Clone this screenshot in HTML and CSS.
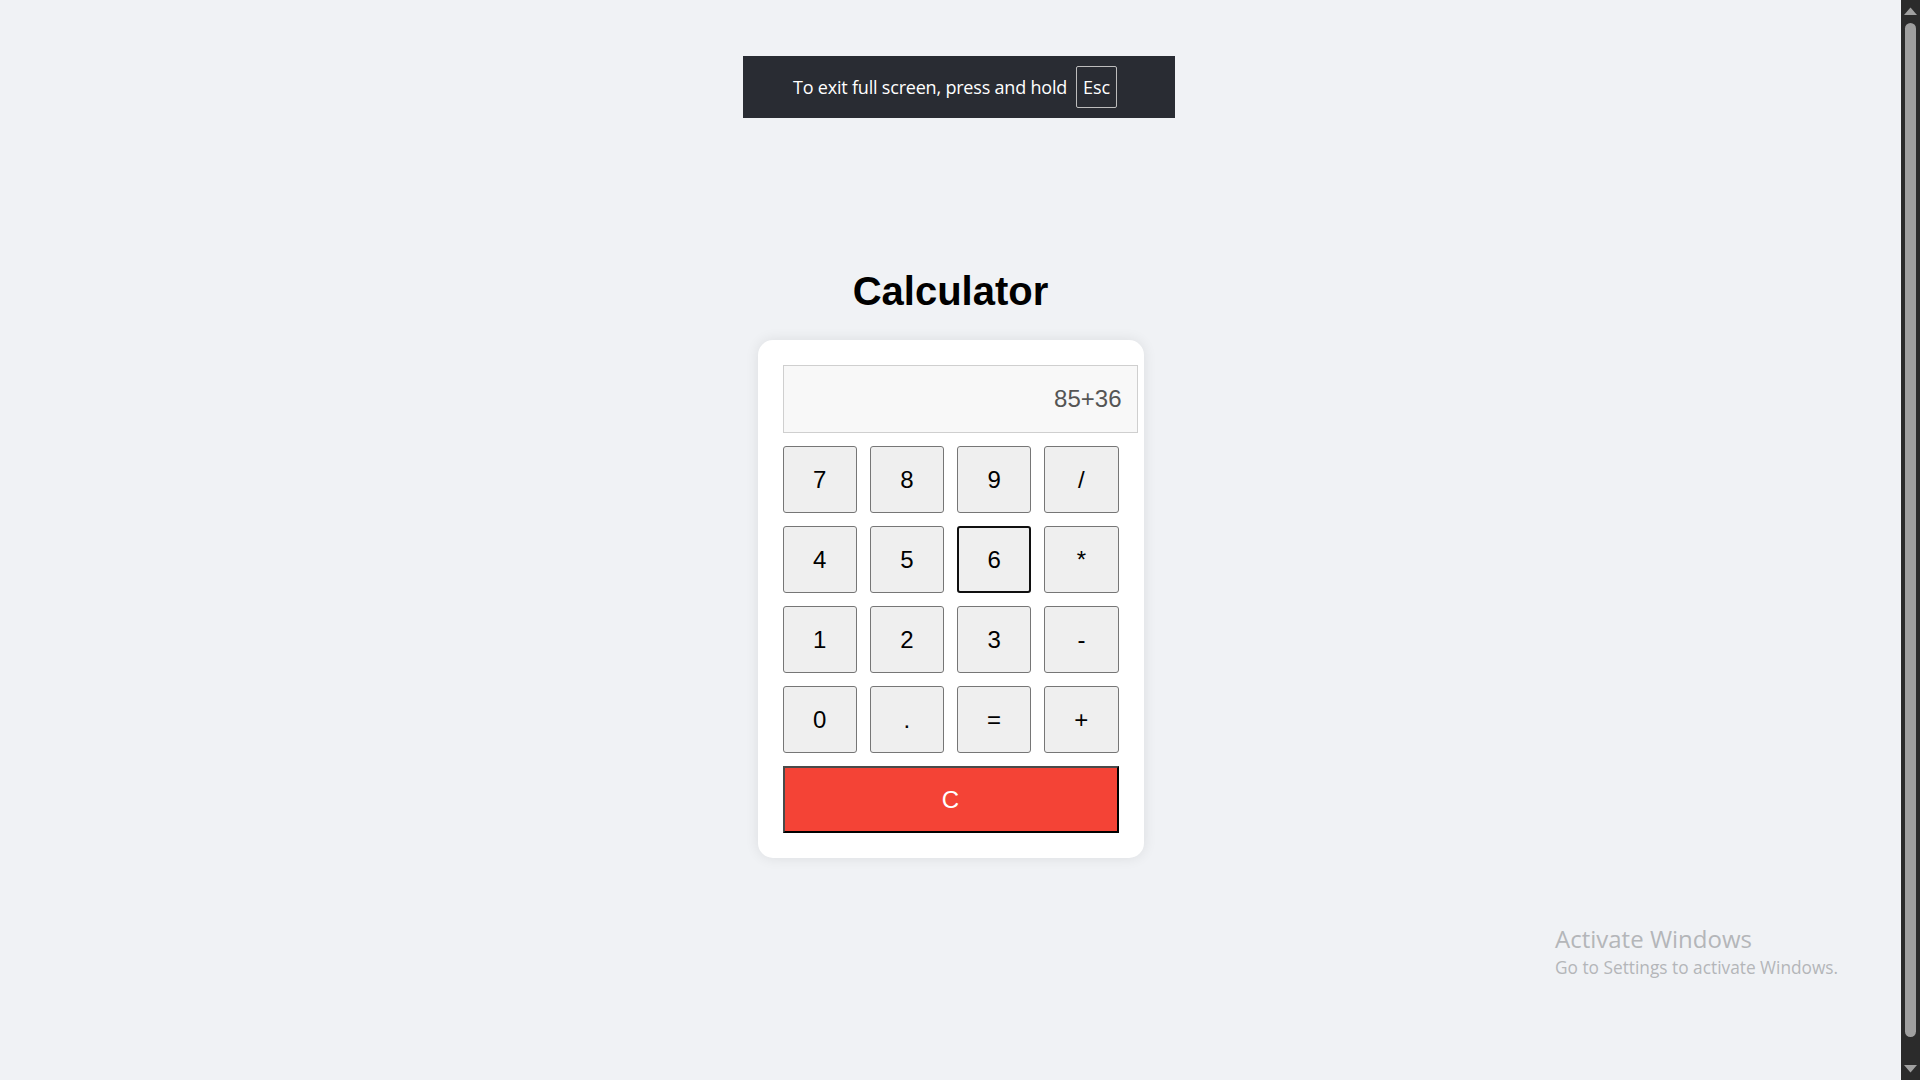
FILE: index.html
```html
<!DOCTYPE html>
<html lang="en">
<head>
<meta charset="utf-8">
<title>Calculator</title>
<link rel="stylesheet" href="styles.css">
</head>
<body>
<div class="screen">
  <main class="page">
    <h1 class="title">Calculator</h1>
    <div class="calculator">
      <div class="display">85+36</div>
      <div class="keys">
        <button class="key">7</button>
        <button class="key">8</button>
        <button class="key">9</button>
        <button class="key">/</button>
        <button class="key">4</button>
        <button class="key">5</button>
        <button class="key key-focus">6</button>
        <button class="key">*</button>
        <button class="key">1</button>
        <button class="key">2</button>
        <button class="key">3</button>
        <button class="key">-</button>
        <button class="key">0</button>
        <button class="key">.</button>
        <button class="key">=</button>
        <button class="key">+</button>
        <button class="key key-clear">C</button>
      </div>
    </div>
  </main>
  <div class="scrollbar">
    <div class="scroll-arrow">
      <svg width="19" height="17" viewBox="0 0 19 17"><polygon points="3,15 16,15 9.5,7.5" fill="#a0a0a0"/></svg>
    </div>
    <div class="scroll-track"><div class="scroll-thumb"></div></div>
    <div class="scroll-arrow">
      <svg width="19" height="17" viewBox="0 0 19 17"><polygon points="3,2 16,2 9.5,9.5" fill="#a0a0a0"/></svg>
    </div>
  </div>
</div>

<div class="fs-bubble">
  <span class="fs-text">To exit full screen, press and hold</span>
  <span class="fs-key">Esc</span>
</div>

<div class="watermark">
  <div class="wm-title">Activate Windows</div>
  <div class="wm-sub">Go to Settings to activate Windows.</div>
</div>
</body>
</html>
```

FILE: styles.css
```css
* { box-sizing: border-box; }

html, body {
  margin: 0;
  padding: 0;
  height: 100%;
  overflow: hidden;
}

body {
  background: #f0f2f5;
  font-family: "Liberation Sans", Arial, sans-serif;
}

.screen {
  display: flex;
  height: 1080px;
}

.page {
  flex: 1;
  display: flex;
  flex-direction: column;
  align-items: center;
  padding-top: 269px;
}

.title {
  margin: 0 0 26px;
  font-size: 40px;
  line-height: 45px;
  font-weight: bold;
  color: #000;
}

.calculator {
  width: 386px;
  padding: 25px;
  background: #fff;
  border-radius: 15px;
  box-shadow: 0 0 14px rgba(0, 0, 0, 0.09);
}

.display {
  width: 355px;
  height: 68px;
  margin-bottom: 13px;
  padding-right: 15px;
  display: flex;
  align-items: center;
  justify-content: flex-end;
  background: #f8f8f8;
  border: 1px solid #cfcfcf;
  font-size: 24px;
  color: #555;
}

.keys {
  width: 336px;
  display: grid;
  grid-template-columns: repeat(4, 1fr);
  grid-auto-rows: 67px;
  gap: 13px;
}

.key {
  margin: 0;
  padding: 0;
  background: #efefef;
  border: 1px solid #767676;
  border-radius: 3px;
  font-family: "Liberation Sans", Arial, sans-serif;
  font-size: 24px;
  color: #000;
}

.key-focus {
  border: 2px solid #101010;
}

.key-clear {
  grid-column: 1 / -1;
  background: #f44336;
  color: #fff;
  border-radius: 0;
  border-width: 2px;
  border-style: solid;
  border-color: #4a4a4a #000 #000 #4a4a4a;
}

/* browser scrollbar */
.scrollbar {
  width: 19px;
  display: flex;
  flex-direction: column;
  background: #2b2b2b;
}

.scroll-arrow {
  height: 17px;
  display: flex;
}

.scroll-track {
  flex: 1;
  padding: 6px 4px 26px;
  display: flex;
}

.scroll-thumb {
  flex: 1;
  background: #9f9f9f;
  border-radius: 6px;
}

/* fullscreen bubble (overlay) */
.fs-bubble {
  position: absolute;
  left: 743px;
  top: 56px;
  width: 432px;
  height: 62px;
  padding-left: 50px;
  display: flex;
  align-items: center;
  gap: 9px;
  background: #292c33;
  color: #fff;
  font-family: "Open Sans", "Noto Sans", sans-serif;
}

.fs-text {
  font-size: 18px;
  letter-spacing: -0.2px;
}

.fs-key {
  width: 41px;
  height: 42px;
  display: flex;
  align-items: center;
  justify-content: center;
  border: 1px solid #bdbdbd;
  border-radius: 2px;
  font-size: 18px;
  letter-spacing: -0.1px;
}

/* OS watermark (overlay) */
.watermark {
  position: absolute;
  left: 1555px;
  top: 924px;
  color: #b4b6b9;
  font-family: "Open Sans", "Noto Sans", sans-serif;
}

.wm-title {
  font-size: 24px;
  line-height: 30px;
}

.wm-sub {
  margin-top: 3px;
  font-size: 17.3px;
  line-height: 22px;
}
```
